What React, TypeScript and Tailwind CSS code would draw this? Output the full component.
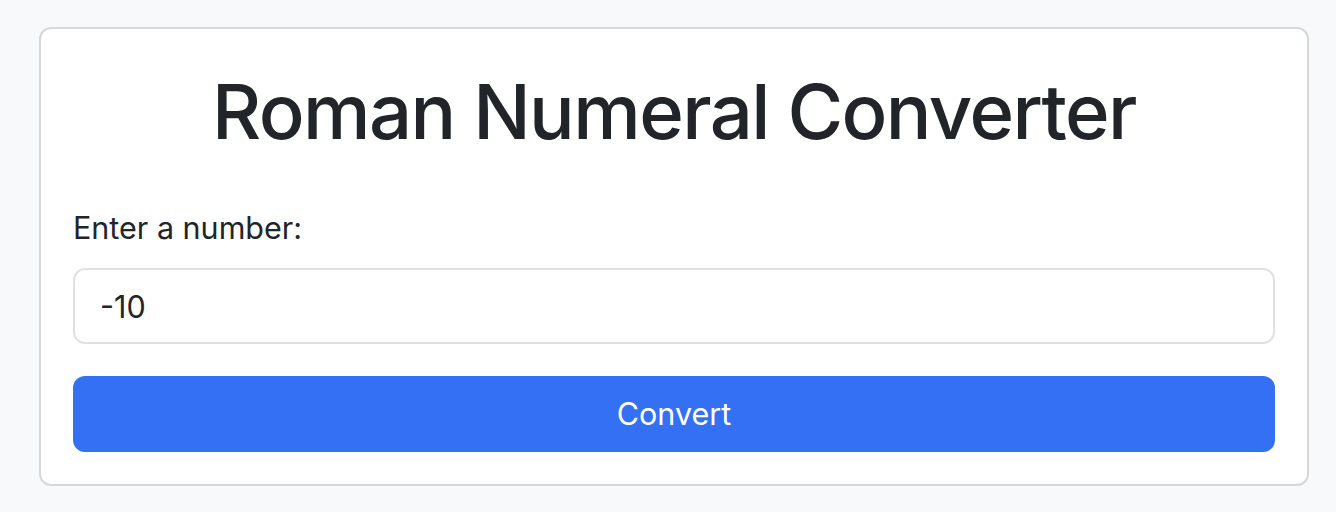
export default function App() {
  return (
    <div
      className="min-h-[512px] bg-[#f8f9fa] pl-[39px] pt-[27px] text-[#212529]"
      style={{ fontFamily: 'Inter, "Liberation Sans", sans-serif' }}
    >
      <div className="w-[1270px] rounded-[12px] border-2 border-[#d5d7d9] bg-white px-[32px] pb-[32px] pt-[34px]">
        <h1 className="text-center text-[76px] font-medium leading-[96px] tracking-[-1.6px]">
          Roman Numeral Converter
        </h1>
        <label htmlFor="num" className="mt-[45px] block text-[30.5px] leading-[48px]">
          Enter a number:
        </label>
        <input
          id="num"
          readOnly
          value="-10"
          className="mt-[16px] block h-[76px] w-full rounded-[12px] border-2 border-[#dee2e6] px-[25px] text-[30.5px] outline-none"
        />
        <button className="mt-[32px] block h-[76px] w-full rounded-[12px] bg-[#3370f3] text-[30.5px] text-white">
          Convert
        </button>
      </div>
    </div>
  );
}
